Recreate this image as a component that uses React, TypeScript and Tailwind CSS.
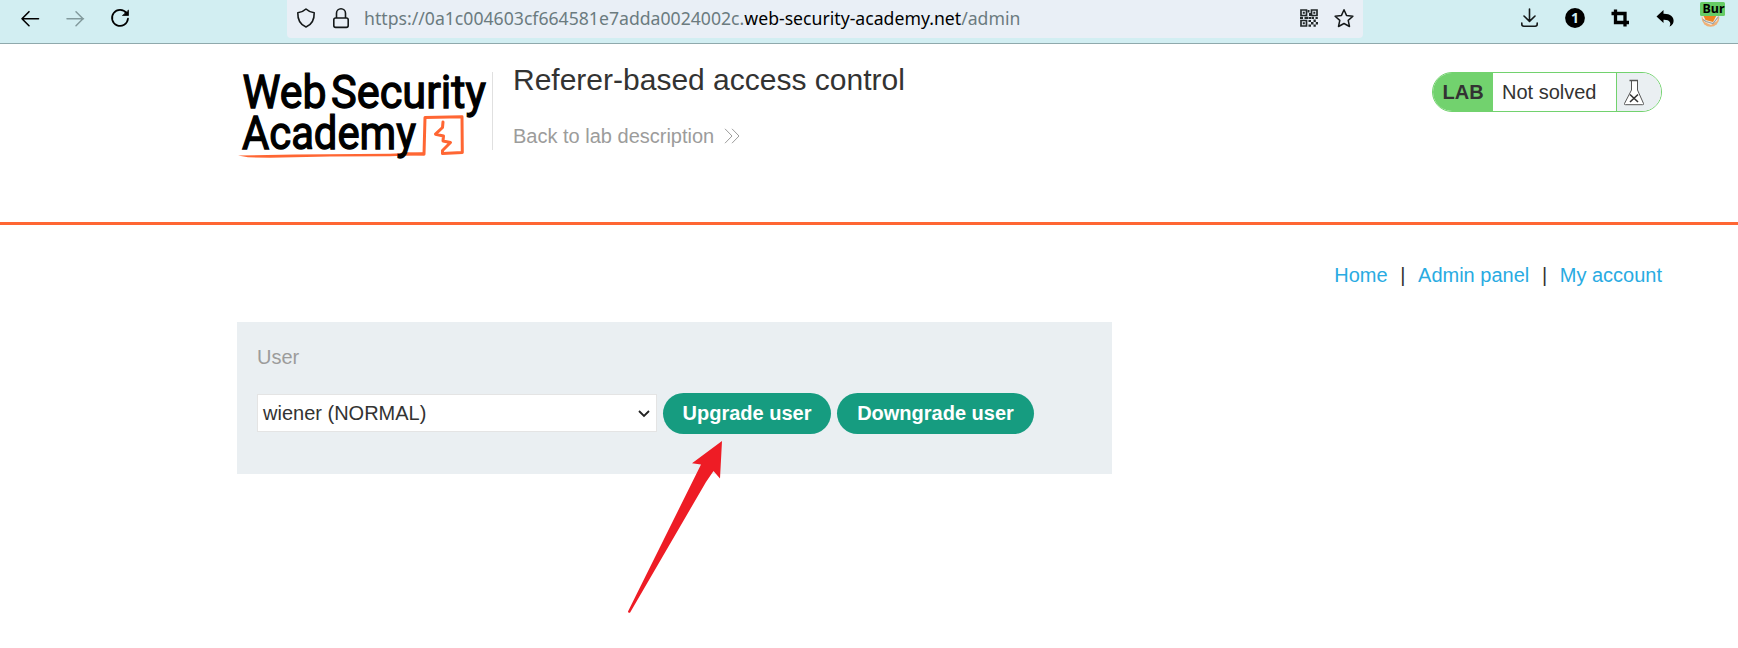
import React from "react";

const ui = "font-['Liberation_Sans',Arial,sans-serif]";

function BrowserBar() {
  return (
    <header className="flex h-11 items-start border-b border-[#8fa9ac] bg-[#d2eef2] text-black">
      <svg className="h-[43px] w-[287px] shrink-0" viewBox="0 0 287 43" fill="none" strokeLinecap="round" strokeLinejoin="round">
        <path d="M22 18.7H38.5M29 11.7L22 18.7L29 25.7" stroke="#000" strokeWidth="1.6" />
        <path d="M67 18.7H83.500M76 11.7L83 18.7L76 25.7" stroke="#829a9d" strokeWidth="1.500" />
        <path d="M126.5 13.200A8 8 0 1 0 128 18.7" stroke="#000" strokeWidth="1.700" />
        <path d="M128.500 10.400V15.500H122.800Z" fill="#000" stroke="#000" strokeWidth=".7" />
      </svg>
      <div className="flex h-[38px] w-[1076px] shrink-0 rounded-b-[4px] bg-[#e9eff6]">
        <svg className="h-[38px] w-[77px] shrink-0" viewBox="0 0 77 38" fill="none" stroke="#15191a" strokeWidth="1.6" strokeLinejoin="round">
          <path d="M19 9C17 11 14 12.200 10.800 12.800C10.600 19.500 12.600 24.500 19 27C25.400 24.500 27.400 19.500 27.200 12.800C24 12.200 21 11 19 9Z" />
          <rect x="46.800" y="18" width="14.400" height="9.400" rx="1.800" />
          <path d="M49.500 18V13.300A4.500 4.500 0 0 1 58.500 13.300V18" />
        </svg>
        <div className="flex h-[36px] grow items-center whitespace-nowrap font-['Noto_Sans','Open_Sans',sans-serif] text-[17.650px] leading-[36px] text-[#6b7b7f]">
          <span>https://0a1c004603cf664581e7adda0024002c.</span>
          <span className="text-black">web-security-academy.net</span>
          <span>/admin</span>
        </div>
        <svg className="h-[38px] w-[67px] shrink-0" viewBox="1296 0 67 38" fill="none">
          <g stroke="#222829" strokeWidth="1.700">
            <path d="M1301 10h5.500v5.500h-5.500zM1311.500 10h5.500v5.500h-5.500zM1301 20.500h5.500v5.500h-5.500z" />
          </g>
          <g fill="#222829">
            <path d="M1302.800 11.800h2v2h-2zM1313.300 11.800h2v2h-2zM1302.800 22.300h2v2h-2zM1307.500 10h2v2.500h-2zM1309 13h2v3h-2zM1300 16.800h3v2.200h-3zM1304.500 16.800h4v2.200h-4zM1309 17h2.500v2h-2.500zM1312 16.800h2v2.200h-2zM1315.500 17h2.300v2h-2.300zM1308.500 20h2.500v2h-2.500zM1311 22h2.500v2.500h-2.500zM1313.500 19.500h2.300v2.500h-2.300zM1315.800 22h2.200v2.500h-2.200zM1308.500 24.500h2.500v2.300h-2.500zM1313.500 24.500h2.300v2.300h-2.300z" />
          </g>
          <path d="M1344 9.800L1346.500 15.400L1352.900 16.200L1348.200 20.400L1349.500 26.500L1344 23.500L1338.500 26.500L1339.800 20.400L1335.100 16.200L1341.500 15.400Z" stroke="#15191a" strokeWidth="1.500" strokeLinejoin="round" />
        </svg>
      </div>
      <svg className="h-[43px] w-[375px] shrink-0" viewBox="1363 0 375 43" fill="none">
        <path d="M1529.500 9V21M1524 16L1529.500 21.300L1535 16M1521.800 23V24.300Q1521.800 26.200 1523.800 26.200H1535.200Q1537.200 26.200 1537.200 24.300V23" stroke="#15191a" strokeWidth="1.600" strokeLinecap="round" strokeLinejoin="round" />
        <circle cx="1575" cy="18" r="9.900" fill="#000" />
        <text x="1575" y="23" textAnchor="middle" className="font-['Noto_Sans',sans-serif] text-[14px] font-bold" fill="#d2eef2">1</text>
        <path d="M1615.500 9.500V22.500H1629M1611.500 13.500H1625V26.500" stroke="#000" strokeWidth="3.300" />
        <path d="M1656.500 16.400L1663.500 10V13.700C1670 13.500 1674.500 17 1673.500 22C1673 24.500 1671 26 1669.500 26.500C1671.500 23 1670 19.500 1663.500 19.700V23Z" fill="#000" />
        <circle cx="1710.500" cy="18" r="8.800" fill="#efb076" />
        <path d="M1701.500 15L1704.500 22L1711 25L1717 21L1719.500 14Z" fill="#efebe6" />
        <path d="M1703.500 16L1705.500 20L1713 22L1716.500 15.500Z" fill="#ef8420" />
        <path d="M1703 19.500L1706 21.500L1713 23.500L1718.500 16.500" stroke="#98a0a2" strokeWidth="1.200" />
        <rect x="1700" y="2" width="25" height="14" rx="1.500" fill="#66cc66" />
        <text x="1702.500" y="12.500" textLength="22" lengthAdjust="spacingAndGlyphs" className="font-['Noto_Sans',sans-serif] text-[12.500px] font-bold" fill="#000">Bur</text>
      </svg>
    </header>
  );
}

function Logo() {
  return (
    <svg className="h-[120px] w-[290px] shrink-0" viewBox="0 0 290 120" fill="none">
      <path d="M18 100.500L75 99.500L170 98.800L203 97.300V100L170 101.200L110 101.500L50 102.800L28 102.300Z" fill="#ff6633" />
      <g stroke="#ff6633" strokeLinecap="round" strokeLinejoin="round">
        <path d="M186 98.800L204 99.300L205 62.500L242 61.700L242.300 97.500L222.500 98.600L222.500 95.500L230.500 87.500L223 86L223.500 81L215.500 79.200L222.500 72.500L223 67" strokeWidth="3" />
      </g>
      <g fill="#000" stroke="#000" strokeWidth="1.300" className="font-[Roboto,sans-serif] text-[46px] font-normal">
        <text x="22.500" y="52.700" textLength="84" lengthAdjust="spacingAndGlyphs">Web</text>
        <text x="111" y="52.700" textLength="155" lengthAdjust="spacingAndGlyphs">Security</text>
        <text x="22" y="93.700" textLength="174" lengthAdjust="spacingAndGlyphs">Academy</text>
      </g>
    </svg>
  );
}

function LabStatus() {
  return (
    <div className="mt-[17px] flex h-10 w-[230px] shrink-0 overflow-hidden rounded-full border border-[#72d26e] bg-white text-[20px] leading-[38px] text-[#333332]">
      <span className="w-[60px] bg-[#72d26e] pl-[9.500px] font-bold">LAB</span>
      <span className="grow pl-[9px]">Not solved</span>
      <span className="w-[45px] border-l border-[#72d26e] bg-[#eaeff2]">
        <svg className="h-[38px] w-[44px]" viewBox="1617 73 44 38" fill="none" stroke="#555" strokeWidth="1">
          <path d="M1631.500 80.500V90L1624.500 103.500Q1624 104.700 1625.500 104.700H1642.500Q1644 104.700 1643.500 103.500L1637.500 90V80.500Z" fill="#fff" />
          <path d="M1629.500 80.500H1638" strokeWidth="1.500" />
          <path d="M1630 94.500L1638 102M1638 94.500L1630 102" stroke="#333" strokeWidth="1.600" />
        </svg>
      </span>
    </div>
  );
}

export default function App() {
  return (
    <div className={`${ui} relative h-[648px] w-[1738px] overflow-hidden bg-white text-[#333332]`}>
      <BrowserBar />
      <section className="flex h-[181px] border-b-3 border-[#ff6633] pl-[220px]">
        <div className="mt-[11px] h-[120px] w-[290px] shrink-0"><Logo /></div>
        <div className="w-[922px] shrink-0">
          <div className="-ml-[18px] mt-[28px] flex h-[78px] border-l border-[#e0e0e0] pl-5">
            <div>
              <h2 className="-mt-[10px] whitespace-nowrap text-[30px] leading-9">Referer-based access control</h2>
              <a className="mt-[26px] flex items-center text-[20px] leading-6 text-[#9c9c9b]">
                Back to lab description
                <svg className="ml-[10px] size-4" viewBox="0 0 16 16" fill="none" stroke="#9c9c9b">
                  <path d="M1 .8L8 8L1 15.200M8 .8L15 8L8 15.200" />
                </svg>
              </a>
            </div>
          </div>
        </div>
        <div className="mt-[11px]"><LabStatus /></div>
      </section>

      <nav className="flex h-[98px] justify-end pr-[76px] pt-[38px] text-[20px] leading-6 text-[#29abe2]">
        <a>Home</a>
        <span className="w-[30.500px] text-center text-[#333332]">|</span>
        <a>Admin panel</a>
        <span className="w-[30.500px] text-center text-[#333332]">|</span>
        <a>My account</a>
      </nav>

      <form className="ml-[237px] mt-[-1px] h-[152px] w-[875px] bg-[#eaeff2] px-5 pt-[23px] text-[20px]">
        <label className="block leading-6 text-[#9c9c9b]">User</label>
        <div className="mt-6 flex items-start gap-[6px]">
          <div className="mt-px flex h-[38px] w-[400px] items-center justify-between border border-[#e4e4e4] bg-white pl-[5px] pr-[6px]">
            <span className="pb-px">wiener (NORMAL)</span>
            <svg className="h-3 w-3" viewBox="0 0 12 12" fill="none" stroke="#222" strokeWidth="1.800">
              <path d="M1 4L6 9L11 4" />
            </svg>
          </div>
          <button type="button" className="h-[41px] w-[168px] rounded-full bg-[#169c80] pb-[2px] font-bold text-white">Upgrade user</button>
          <button type="button" className="h-[41px] w-[197px] rounded-full bg-[#169c80] pb-[2px] font-bold text-white">Downgrade user</button>
        </div>
      </form>

      <svg className="absolute left-[610px] top-[430px] h-[200px] w-[140px]" viewBox="0 0 140 200">
        <path d="M112 11L110 48.500L103.500 41L96 52L20 182.700Q18 183.300 18 181.500L91 34.500L82 33.200Z" fill="#ee1c25" />
      </svg>
    </div>
  );
}
